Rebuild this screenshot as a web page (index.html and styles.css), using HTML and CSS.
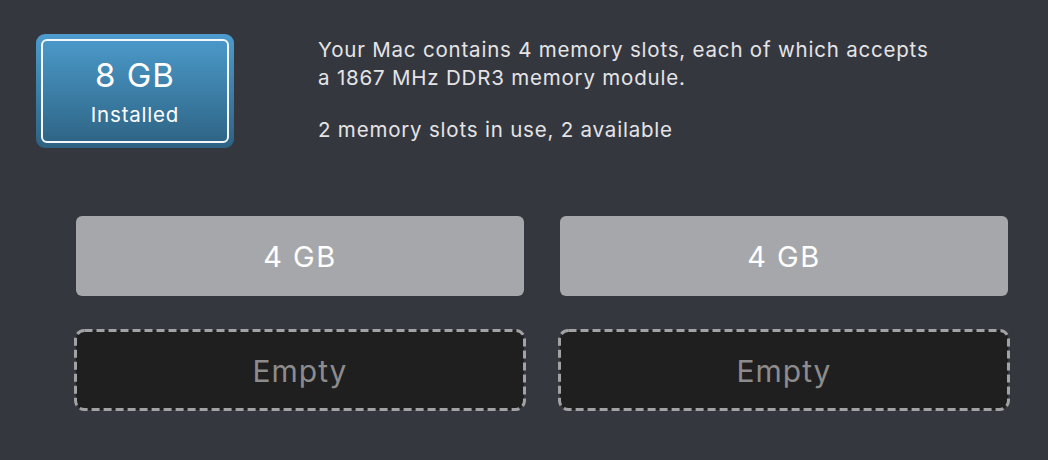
FILE: index.html
```html
<!DOCTYPE html>
<html>
<head>
<meta charset="utf-8">
<link rel="stylesheet" href="styles.css">
</head>
<body>
<div class="page">
  <div class="top">
    <div class="badge">
      <div class="badge-inner">
        <div class="badge-size">8 GB</div>
        <div class="badge-label">Installed</div>
      </div>
    </div>
    <div class="info">
      <p>Your Mac contains 4 memory slots, each of which accepts<br>a 1867 MHz DDR3 memory module.</p>
      <p>2 memory slots in use, 2 available</p>
    </div>
  </div>
  <div class="slots">
    <div class="slot filled">4 GB</div>
    <div class="slot filled">4 GB</div>
    <div class="slot empty">
      <svg class="dash" viewBox="0 0 452 82" preserveAspectRatio="none"><rect x="1.5" y="1.5" width="449" height="79" rx="9" ry="9"/></svg>
      <span>Empty</span>
    </div>
    <div class="slot empty">
      <svg class="dash" viewBox="0 0 452 82" preserveAspectRatio="none"><rect x="1.5" y="1.5" width="449" height="79" rx="9" ry="9"/></svg>
      <span>Empty</span>
    </div>
  </div>
</div>
</body>
</html>
```
FILE: styles.css
```css
html, body {
  margin: 0;
  padding: 0;
  background: #35373f;
  height: 100%;
}
body {
  font-family: Inter, "Open Sans", "Liberation Sans", sans-serif;
  color: #e6e6e8;
}
.page {
  padding: 34px 0 0 36px;
}
.top {
  display: flex;
  align-items: flex-start;
  gap: 84px;
}
.badge {
  width: 198px;
  height: 114px;
  box-sizing: border-box;
  border-radius: 9px;
  background: linear-gradient(#4c9ccd, #2d6282);
  padding: 5px;
}
.badge-inner {
  height: 100%;
  box-sizing: border-box;
  border: 2px solid #f4f8fb;
  border-radius: 6px;
  display: flex;
  flex-direction: column;
  align-items: center;
  color: #ffffff;
}
.badge-size {
  font-size: 33px;
  line-height: 36px;
  letter-spacing: 1px;
  margin-top: 16px;
}
.badge-label {
  font-size: 20.5px;
  line-height: 24px;
  letter-spacing: 0.8px;
  margin-top: 10px;
}
.info {
  padding-top: 2px;
}
.info p {
  margin: 0 0 24px 0;
  font-size: 20.5px;
  line-height: 28px;
  letter-spacing: 0.8px;
  color: #e4e4e6;
}
.slots {
  display: grid;
  grid-template-columns: 448px 448px;
  grid-template-rows: 80px 80px;
  column-gap: 36px;
  row-gap: 34px;
  margin: 48px 0 0 40px;
}
.slot {
  display: flex;
  align-items: center;
  justify-content: center;
  border-radius: 6px;
  position: relative;
}
.filled {
  background: #a6a7aa;
  color: #ffffff;
  font-size: 29px;
  letter-spacing: 1.5px;
}
.empty {
  background: #1f1f1f;
  color: #8c8c8e;
  font-size: 30px;
  letter-spacing: 1px;
  border-radius: 9px;
}
.empty span {
  position: relative;
  top: 1px;
}
.dash {
  position: absolute;
  left: -2px;
  top: -1px;
  width: 452px;
  height: 82px;
  overflow: visible;
}
.dash rect {
  fill: none;
  stroke: #a2a2a4;
  stroke-width: 3;
  stroke-dasharray: 8 4;
}
```
